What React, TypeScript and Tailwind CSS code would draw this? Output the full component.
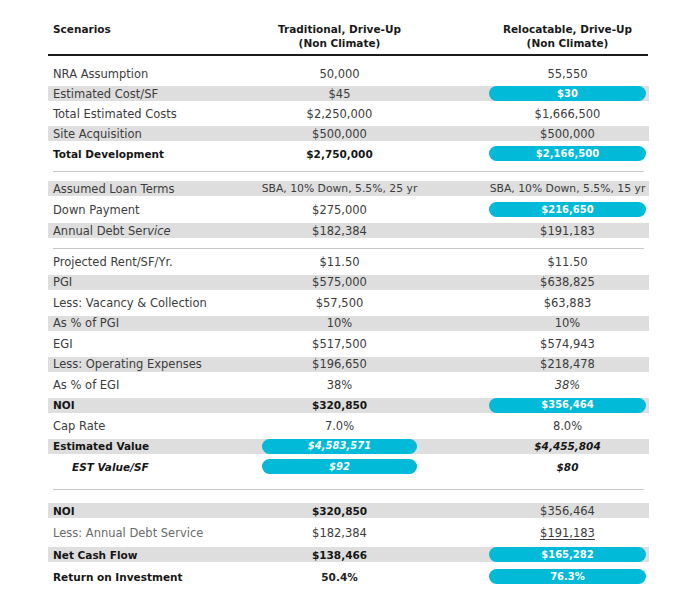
import React from "react"

type Cell = {
  text: React.ReactNode
  pill?: boolean
  bold?: boolean
  semi?: boolean
  italic?: boolean
  underline?: boolean
  small?: boolean
}

type Row = {
  label: React.ReactNode
  bold?: boolean
  italic?: boolean
  indent?: boolean
  muted?: boolean
  band?: boolean
  a: Cell
  b: Cell
}

const sections: { gap: string; pad: string; rows: Row[] }[] = [
  {
    gap: "gap-[5px]",
    pad: "pt-[10px]",
    rows: [
      { label: "NRA Assumption", a: { text: "50,000" }, b: { text: "55,550" } },
      { label: "Estimated Cost/SF", band: true, a: { text: "$45" }, b: { text: "$30", pill: true } },
      { label: "Total Estimated Costs", a: { text: "$2,250,000" }, b: { text: "$1,666,500" } },
      { label: "Site Acquisition", band: true, a: { text: "$500,000" }, b: { text: "$500,000" } },
      {
        label: "Total Development",
        bold: true,
        a: { text: "$2,750,000", bold: true },
        b: { text: "$2,166,500", pill: true },
      },
    ],
  },
  {
    gap: "gap-[6px]",
    pad: "pt-[9px]",
    rows: [
      {
        label: "Assumed Loan Terms",
        band: true,
        a: { text: "SBA, 10% Down, 5.5%, 25 yr", small: true },
        b: { text: "SBA, 10% Down, 5.5%, 15 yr", small: true },
      },
      { label: "Down Payment", a: { text: "$275,000" }, b: { text: "$216,650", pill: true } },
      {
        label: (
          <>
            Annual Debt Ser<i>vice</i>
          </>
        ),
        band: true,
        a: { text: "$182,384" },
        b: { text: "$191,183" },
      },
    ],
  },
  {
    gap: "gap-[5.5px]",
    pad: "pt-[5px]",
    rows: [
      { label: "Projected Rent/SF/Yr.", a: { text: "$11.50" }, b: { text: "$11.50" } },
      { label: "PGI", band: true, a: { text: "$575,000" }, b: { text: "$638,825" } },
      { label: "Less: Vacancy & Collection", a: { text: "$57,500" }, b: { text: "$63,883" } },
      { label: "As % of PGI", band: true, a: { text: "10%" }, b: { text: "10%" } },
      { label: "EGI", a: { text: "$517,500" }, b: { text: "$574,943" } },
      { label: "Less: Operating Expenses", band: true, a: { text: "$196,650" }, b: { text: "$218,478" } },
      { label: "As % of EGI", a: { text: "38%" }, b: { text: "38%", italic: true } },
      {
        label: "NOI",
        bold: true,
        band: true,
        a: { text: "$320,850", bold: true },
        b: { text: "$356,464", pill: true },
      },
      { label: "Cap Rate", a: { text: "7.0%" }, b: { text: "8.0%" } },
      {
        label: "Estimated Value",
        bold: true,
        band: true,
        a: { text: "$4,583,571", pill: true, italic: true },
        b: { text: "$4,455,804", bold: true, italic: true },
      },
      {
        label: "EST Value/SF",
        bold: true,
        italic: true,
        indent: true,
        a: { text: "$92", pill: true, italic: true },
        b: { text: "$80", bold: true, italic: true },
      },
    ],
  },
  {
    gap: "gap-[7px]",
    pad: "pt-[13px]",
    rows: [
      { label: "NOI", bold: true, band: true, a: { text: "$320,850", bold: true }, b: { text: "$356,464" } },
      {
        label: "Less: Annual Debt Service",
        muted: true,
        a: { text: "$182,384" },
        b: { text: "$191,183", underline: true },
      },
      {
        label: "Net Cash Flow",
        bold: true,
        band: true,
        a: { text: "$138,466", bold: true },
        b: { text: "$165,282", pill: true },
      },
      {
        label: "Return on Investment",
        bold: true,
        a: { text: "50.4%", semi: true },
        b: { text: "76.3%", pill: true },
      },
    ],
  },
]

function Value({ cell, width }: { cell: Cell; width: string }) {
  if (cell.pill) {
    return (
      <div
        className={`${width} h-[15px] rounded-full bg-[#00bad8] text-white text-[10px] font-bold flex items-center justify-center ${
          cell.italic ? "italic" : ""
        }`}
      >
        {cell.text}
      </div>
    )
  }
  return (
    <div
      className={`${width} h-[15px] flex items-center justify-center whitespace-nowrap ${
        cell.bold
          ? "font-bold text-[10.5px] text-[#161616]"
          : cell.semi
            ? "font-semibold text-[10.5px] text-[#222]"
            : cell.small
              ? "text-[10.8px] text-[#3c3c3c]"
              : "text-[11.5px] text-[#3c3c3c]"
      } ${cell.italic ? "italic" : ""} ${cell.underline ? "underline underline-offset-2" : ""}`}
    >
      {cell.text}
    </div>
  )
}

function TableRow({ row }: { row: Row }) {
  return (
    <div className={`flex h-[15px] items-center ${row.band ? "bg-[#dedede]" : ""}`}>
      <div
        className={`w-[214px] whitespace-nowrap ${row.indent ? "pl-[24px]" : "pl-[5px]"} ${
          row.bold
            ? "font-bold text-[10.5px] text-[#161616]"
            : row.muted
              ? "text-[11.5px] text-[#6a6a6a]"
              : "text-[11.5px] text-[#3c3c3c]"
        } ${row.italic ? "italic" : ""}`}
      >
        {row.label}
      </div>
      <Value cell={row.a} width="w-[155px]" />
      <div className="w-[72px]" />
      <Value cell={row.b} width="w-[157px]" />
    </div>
  )
}

export default function App() {
  return (
    <div
      className="w-[696px] h-[598px] bg-white text-[10.5px] leading-[14px]"
      style={{ fontFamily: '"DejaVu Sans", sans-serif' }}
    >
      <div className="ml-[48px] w-[601px] pt-[22px]">
        <div className="flex pb-[4px] text-[#1a1a1a]">
          <div className="w-[214px] pl-[5px] font-bold">Scenarios</div>
          <div className="w-[155px] text-center font-semibold">
            Traditional, Drive-Up
            <br />
            (Non Climate)
          </div>
          <div className="w-[72px]" />
          <div className="w-[157px] text-center font-semibold">
            Relocatable, Drive-Up
            <br />
            (Non Climate)
          </div>
        </div>
        <div className="h-[2px] w-[600px] bg-[#1a1a1a]" />

        {sections.map((s, i) => (
          <div key={i}>
            {i > 0 && (
              <div className={`${i === 3 ? "mt-[15px]" : "mt-[10px]"} mx-[5px] h-px bg-[#c8c8c8]`} />
            )}
            <div className={`flex flex-col ${s.gap} ${s.pad}`}>
              {s.rows.map((r, j) => (
                <TableRow key={j} row={r} />
              ))}
            </div>
          </div>
        ))}
      </div>
    </div>
  )
}
